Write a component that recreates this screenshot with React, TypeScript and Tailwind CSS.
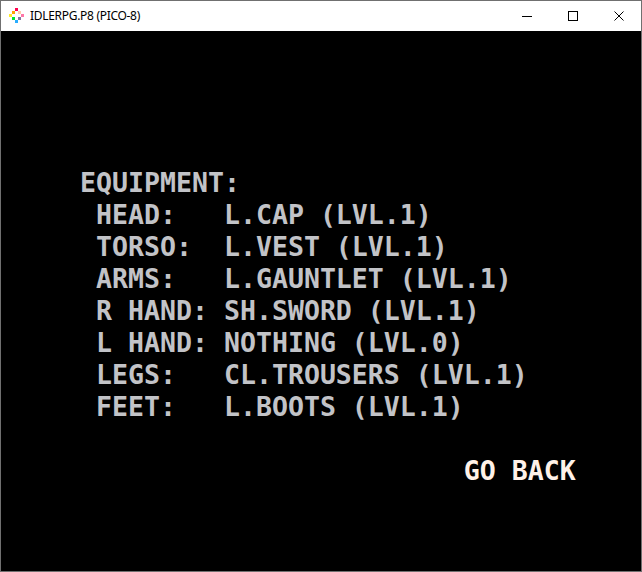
import React from "react";

const lines: string[] = [
  "EQUIPMENT:",
  " HEAD:   L.CAP (LVL.1)",
  " TORSO:  L.VEST (LVL.1)",
  " ARMS:   L.GAUNTLET (LVL.1)",
  " R HAND: SH.SWORD (LVL.1)",
  " L HAND: NOTHING (LVL.0)",
  " LEGS:   CL.TROUSERS (LVL.1)",
  " FEET:   L.BOOTS (LVL.1)",
];

function PicoIcon() {
  const px: [number, number, string][] = [
    [15, 7, "#FF004D"],
    [12, 10, "#FFA300"],
    [18, 10, "#FFCCAA"],
    [9, 13, "#FFEC27"],
    [21, 13, "#FF77A8"],
    [12, 16, "#00E436"],
    [18, 16, "#83769C"],
    [15, 19, "#29ADFF"],
  ];
  return (
    <svg width="18" height="18" viewBox="8 6 18 18" className="block">
      {px.map(([x, y, c], i) => (
        <rect key={i} x={x} y={y} width="3" height="3" fill={c} />
      ))}
    </svg>
  );
}

export default function App() {
  return (
    <div className="w-[642px] h-[572px] flex flex-col bg-black border border-[#707070] overflow-hidden">
      <div className="h-[30px] bg-white flex items-center shrink-0">
        <div className="ml-[7px]">
          <PicoIcon />
        </div>
        <span
          className="ml-[4px] text-[12px] tracking-[-0.3px] text-black"
          style={{ fontFamily: '"Noto Sans", "Liberation Sans", sans-serif' }}
        >
          IDLERPG.P8 (PICO-8)
        </span>
        <div className="ml-auto flex h-full">
          <div className="w-[46px] h-full flex items-center justify-center">
            <div className="w-[10px] h-px bg-black" />
          </div>
          <div className="w-[46px] h-full flex items-center justify-center">
            <div className="w-[10px] h-[10px] border border-black" />
          </div>
          <div className="w-[45px] h-full flex items-center justify-center">
            <svg width="10" height="10" viewBox="0 0 10 10">
              <path d="M0.5 0.5 L9.5 9.5 M9.5 0.5 L0.5 9.5" stroke="#000" strokeWidth="1" />
            </svg>
          </div>
        </div>
      </div>
      <div className="flex-1 bg-black pl-[79px] pt-[136px]">
        <div
          className="whitespace-pre font-bold text-[26.57px] leading-[32px] text-[#C2C3C7]"
          style={{ fontFamily: '"DejaVu Sans Mono", monospace' }}
        >
          {lines.map((l, i) => (
            <div key={i}>{l}</div>
          ))}
          <div>&nbsp;</div>
          <div className="text-[#FFF1E8]">{"                        GO BACK"}</div>
        </div>
      </div>
    </div>
  );
}
